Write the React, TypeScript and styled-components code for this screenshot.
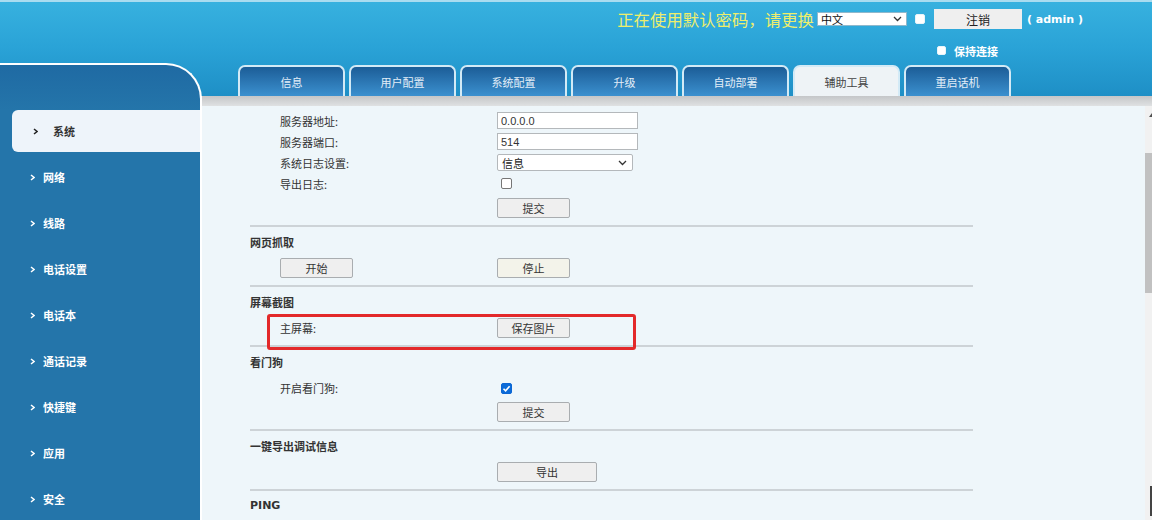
import styled, { createGlobalStyle } from 'styled-components';

const GlobalStyle = createGlobalStyle`
  html, body {
    margin: 0;
    padding: 0;
    background: #ffffff;
  }
  * {
    box-sizing: border-box;
  }
  body {
    font-family: "Liberation Sans", "Noto Sans CJK SC", sans-serif;
    font-size: 11px;
    color: #333;
  }
`;

const Page = styled.div`
  width: 1152px;
  height: 526px;
  overflow: hidden;
  border-top: 2px solid #a9dcf0;
  background: linear-gradient(
    to bottom,
    #37b1df 0px,
    #2aa3d7 45px,
    #1e8fc6 94px,
    #ffffff 94px
  );
`;

const Header = styled.header`
  height: 61px;
  padding-top: 7px;
  padding-right: 69px;
  display: flex;
  justify-content: flex-end;
`;

const TopGrid = styled.div`
  display: grid;
  grid-template-columns: auto auto auto 88px auto;
  grid-template-rows: 20px auto;
  align-items: center;
`;

const Warning = styled.span`
  font-family: "Noto Sans CJK SC", sans-serif;
  font-size: 16.4px;
  line-height: 20px;
  color: #eeee6c;
  margin-right: 3px;
`;

const LangSelect = styled.div`
  width: 90px;
  height: 14px;
  background: #ffffff;
  border: 1px solid #8fb8cc;
  display: flex;
  align-items: center;
  justify-content: space-between;
  padding: 0 4px 0 3px;
  font-family: "Noto Sans CJK SC", sans-serif;
  font-size: 11px;
  line-height: 12px;
  color: #111;
  margin-right: 8px;
`;

const Check = styled.span<{ $checked?: boolean; $size?: number }>`
  display: inline-flex;
  align-items: center;
  justify-content: center;
  width: ${(p) => p.$size ?? 11}px;
  height: ${(p) => p.$size ?? 11}px;
  border-radius: 2px;
  border: 1px solid ${(p) => (p.$checked ? '#0b66d4' : '#767676')};
  background: ${(p) => (p.$checked ? '#0b6bd8' : '#ffffff')};
`;

const TopCheck = styled(Check)`
  border-color: #e8f4fa;
  margin-right: 9px;
`;

const KeepCheck = styled(Check)`
  border-color: #e8f4fa;
`;

const LogoutButton = styled.button`
  width: 88px;
  height: 20px;
  border: none;
  background: #efefef;
  font-family: "Noto Sans CJK SC", sans-serif;
  font-size: 12px;
  color: #222;
  padding: 0;
`;

const Admin = styled.span`
  font-family: "DejaVu Sans", sans-serif;
  font-weight: bold;
  font-size: 11px;
  color: #ffffff;
  margin-left: 5px;
  white-space: pre;
`;

const KeepRow = styled.div`
  grid-column: 4 / span 2;
  display: flex;
  align-items: center;
  gap: 8px;
  margin-top: 9px;
  padding-left: 3px;
  font-family: "Noto Sans CJK SC", sans-serif;
  font-weight: bold;
  font-size: 11px;
  color: #ffffff;
`;

const Body = styled.div`
  display: flex;
  height: 457px;
`;

const Sidebar = styled.nav`
  width: 202px;
  flex-shrink: 0;
  display: flex;
  flex-direction: column;
  border-top: 2px solid #ffffff;
  border-right: 2px solid #ffffff;
  border-top-right-radius: 36px;
  background: linear-gradient(to bottom, #1f6aa3 0px, #2475aa 45px, #2475aa 100%);
  padding-top: 43px;
  overflow: hidden;
`;

const MenuItem = styled.div<{ $active?: boolean }>`
  flex-shrink: 0;
  height: 42px;
  margin: 2px 0 2px ${(p) => (p.$active ? 12 : 0)}px;
  padding-left: ${(p) => (p.$active ? 21 : 30)}px;
  display: flex;
  align-items: center;
  gap: ${(p) => (p.$active ? 15 : 8)}px;
  border-radius: 6px 0 0 6px;
  background: ${(p) => (p.$active ? '#eef4fa' : 'transparent')};
  color: ${(p) => (p.$active ? '#333' : '#ffffff')};
  font-family: "Noto Sans CJK SC", sans-serif;
  font-weight: bold;
  font-size: 11px;
`;

const Main = styled.div`
  flex: 1;
  display: flex;
  flex-direction: column;
  min-width: 0;
`;

const TabBar = styled.div`
  height: 33px;
  padding: 2px 0 0 36px;
  display: flex;
  gap: 4px;
`;

const Tab = styled.div<{ $active?: boolean }>`
  width: 107px;
  height: 31px;
  border: 2px solid #d3eaf6;
  border-bottom: none;
  border-radius: 7px 7px 0 0;
  background: ${(p) =>
    p.$active ? '#eef3f6' : 'linear-gradient(to bottom, #1c5d97, #3b90cf)'};
  color: ${(p) => (p.$active ? '#444' : '#e3eef8')};
  display: flex;
  align-items: center;
  justify-content: center;
  font-family: "Noto Sans CJK SC", sans-serif;
  font-size: 11px;
`;

const GreyBar = styled.div`
  height: 10px;
  background: linear-gradient(to bottom, #c4c6c8, #dfe1e2);
`;

const ContentRow = styled.div`
  flex: 1;
  display: flex;
  background: #eef6fa;
`;

const Form = styled.div`
  flex: 1;
  padding: 4px 0 0 48px;
`;

const FieldRow = styled.div<{ $gap?: number }>`
  position: relative;
  height: ${(p) => (p.$gap !== undefined ? 20 : 21)}px;
  margin-top: ${(p) => p.$gap ?? 0}px;
  padding-left: 30px;
  display: flex;
  align-items: center;
`;

const Label = styled.span`
  width: 217px;
  flex-shrink: 0;
  font-family: "Noto Sans CJK SC", sans-serif;
  font-size: 11px;
  color: #333;
`;

const TextInput = styled.input`
  width: 141px;
  height: 17px;
  border: 1px solid #b4b8bb;
  background: #ffffff;
  padding: 0 3px;
  font-family: "Liberation Sans", sans-serif;
  font-size: 11px;
  color: #333;
  outline: none;
`;

const SelectBox = styled.div`
  width: 136px;
  height: 17px;
  border: 1px solid #b4b8bb;
  border-radius: 2px;
  background: #ffffff;
  display: flex;
  align-items: center;
  justify-content: space-between;
  padding: 0 5px 0 4px;
  font-family: "Noto Sans CJK SC", sans-serif;
  font-size: 11px;
  color: #222;
`;

const CheckCell = styled.div`
  padding-left: 4px;
  display: flex;
`;

const Button = styled.button<{ $width?: number; $tint?: boolean }>`
  width: ${(p) => p.$width ?? 73}px;
  height: 20px;
  padding: 0;
  border: 1px solid #a9adb0;
  border-radius: 2px;
  background: ${(p) => (p.$tint ? '#f3f3ea' : '#efefef')};
  font-family: "Noto Sans CJK SC", sans-serif;
  font-size: 11px;
  color: #333;
`;

const Heading = styled.div`
  height: 20px;
  line-height: 20px;
  margin-top: 5px;
  font-family: "Noto Sans CJK SC", sans-serif;
  font-weight: bold;
  font-size: 11px;
  color: #333;
`;

const PingHeading = styled(Heading)`
  font-family: "DejaVu Sans", sans-serif;
`;

const Divider = styled.div`
  width: 723px;
  height: 2px;
  margin-top: 7px;
  background: #cdd3d7;
`;

const Annotation = styled.div`
  position: absolute;
  left: 17px;
  top: -4px;
  width: 369px;
  height: 36px;
  border: 3px solid #e3292a;
  border-radius: 3px;
  pointer-events: none;
`;

const ScrollTrack = styled.div`
  width: 7px;
  flex-shrink: 0;
  background: #f1f1f1;
  display: flex;
  flex-direction: column;
  align-items: flex-end;
`;

const ScrollArrow = styled.div`
  margin-top: 7px;
  width: 0;
  height: 0;
  border-left: 3px solid transparent;
  border-right: 0 solid transparent;
  border-bottom: 4px solid #505050;
`;

const ScrollThumb = styled.div`
  width: 7px;
  height: 140px;
  margin-top: 36px;
  background: #c1c1c1;
`;

const ScrollEnd = styled.div`
  margin-top: auto;
  margin-bottom: 4px;
  width: 2px;
  height: 30px;
  background: #444;
`;

const Chevron = ({ color }: { color: string }) => (
  <svg width="5" height="7" viewBox="0 0 5 7">
    <path d="M1 1 L4 3.5 L1 6" fill="none" stroke={color} strokeWidth="1.5" />
  </svg>
);

const DownArrow = () => (
  <svg width="9" height="6" viewBox="0 0 9 6">
    <path d="M1 1 L4.5 4.5 L8 1" fill="none" stroke="#333" strokeWidth="1.3" />
  </svg>
);

const Tick = () => (
  <svg width="9" height="9" viewBox="0 0 9 9">
    <path d="M1.5 4.7 L3.6 6.8 L7.6 2.2" fill="none" stroke="#fff" strokeWidth="1.6" />
  </svg>
);

const menu = ['系统', '网络', '线路', '电话设置', '电话本', '通话记录', '快捷键', '应用', '安全'];
const tabs = ['信息', '用户配置', '系统配置', '升级', '自动部署', '辅助工具', '重启话机'];

const App = () => {
  return (
    <>
      <GlobalStyle />
      <Page>
        <Header>
          <TopGrid>
            <Warning>正在使用默认密码，请更换</Warning>
            <LangSelect>
              <span>中文</span>
              <DownArrow />
            </LangSelect>
            <TopCheck $size={10} />
            <LogoutButton>注销</LogoutButton>
            <Admin>( admin )</Admin>
            <KeepRow>
              <KeepCheck $size={9} />
              <span>保持连接</span>
            </KeepRow>
          </TopGrid>
        </Header>
        <Body>
          <Sidebar>
            {menu.map((m, i) => (
              <MenuItem key={m} $active={i === 0}>
                <Chevron color={i === 0 ? '#222' : '#ffffff'} />
                <span>{m}</span>
              </MenuItem>
            ))}
          </Sidebar>
          <Main>
            <TabBar>
              {tabs.map((t) => (
                <Tab key={t} $active={t === '辅助工具'}>
                  {t}
                </Tab>
              ))}
            </TabBar>
            <GreyBar />
            <ContentRow>
              <Form>
                <FieldRow>
                  <Label>服务器地址:</Label>
                  <TextInput defaultValue="0.0.0.0" />
                </FieldRow>
                <FieldRow>
                  <Label>服务器端口:</Label>
                  <TextInput defaultValue="514" />
                </FieldRow>
                <FieldRow>
                  <Label>系统日志设置:</Label>
                  <SelectBox>
                    <span>信息</span>
                    <DownArrow />
                  </SelectBox>
                </FieldRow>
                <FieldRow>
                  <Label>导出日志:</Label>
                  <CheckCell>
                    <Check />
                  </CheckCell>
                </FieldRow>
                <FieldRow $gap={4}>
                  <Label />
                  <Button>提交</Button>
                </FieldRow>
                <Divider />

                <Heading>网页抓取</Heading>
                <FieldRow $gap={6}>
                  <Label>
                    <Button>开始</Button>
                  </Label>
                  <Button $tint>停止</Button>
                </FieldRow>
                <Divider />

                <Heading>屏幕截图</Heading>
                <FieldRow $gap={6}>
                  <Label>主屏幕:</Label>
                  <Button>保存图片</Button>
                  <Annotation />
                </FieldRow>
                <Divider />

                <Heading>看门狗</Heading>
                <FieldRow $gap={6}>
                  <Label>开启看门狗:</Label>
                  <CheckCell>
                    <Check $checked>
                      <Tick />
                    </Check>
                  </CheckCell>
                </FieldRow>
                <FieldRow $gap={4}>
                  <Label />
                  <Button>提交</Button>
                </FieldRow>
                <Divider />

                <Heading>一键导出调试信息</Heading>
                <FieldRow $gap={6}>
                  <Label />
                  <Button $width={100}>导出</Button>
                </FieldRow>
                <Divider />

                <PingHeading>PING</PingHeading>
              </Form>
              <ScrollTrack>
                <ScrollArrow />
                <ScrollThumb />
                <ScrollEnd />
              </ScrollTrack>
            </ContentRow>
          </Main>
        </Body>
      </Page>
    </>
  );
};

export default App;
